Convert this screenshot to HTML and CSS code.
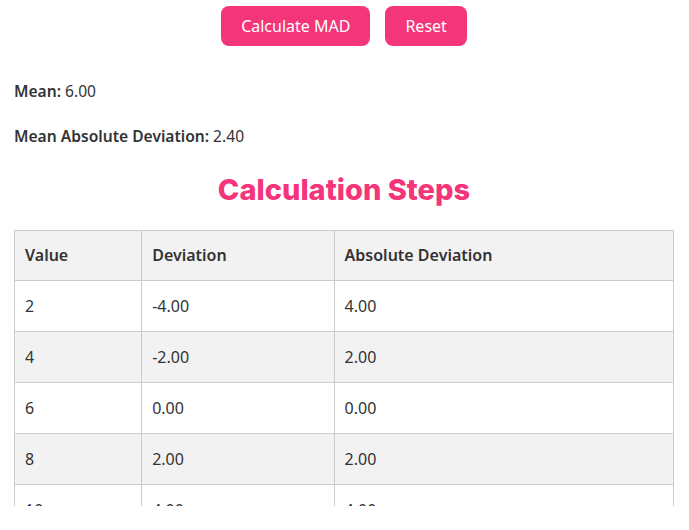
FILE: index.html
```html
<!DOCTYPE html>
<html lang="en">
<head>
  <meta charset="UTF-8">
  <title>Mean Absolute Deviation Calculator</title>
  <link rel="stylesheet" href="styles.css">
</head>
<body>

  <div class="calculator">
    <!-- buttons -->
    <div class="actions">
      <button class="btn">Calculate MAD</button>
      <button class="btn">Reset</button>
    </div>

    <!-- results -->
    <div class="result">
      <p><strong>Mean:</strong> 6.00</p>
      <p><strong>Mean Absolute Deviation:</strong> 2.40</p>
    </div>

    <h2 class="steps-title">Calculation Steps</h2>

    <table class="steps">
      <thead>
        <tr>
          <th class="col-value">Value</th>
          <th class="col-dev">Deviation</th>
          <th>Absolute Deviation</th>
        </tr>
      </thead>
      <tbody>
        <tr><td>2</td><td>-4.00</td><td>4.00</td></tr>
        <tr><td>4</td><td>-2.00</td><td>2.00</td></tr>
        <tr><td>6</td><td>0.00</td><td>0.00</td></tr>
        <tr><td>8</td><td>2.00</td><td>2.00</td></tr>
        <tr><td>10</td><td>4.00</td><td>4.00</td></tr>
      </tbody>
    </table>
  </div>

</body>
</html>
```

FILE: styles.css
```css
body {
  font-family: "Noto Sans", "Open Sans", sans-serif;
  font-size: 16px;
  color: #333;
  background: #fff;
  margin: 0;
}
/* clipped calculator area */
.calculator {
  height: 500px;
  overflow: hidden;
  padding: 6px 15px 0 14px;
}
.actions {
  display: flex;
  justify-content: center;
  gap: 15px;
}
.btn {
  font-family: inherit;
  font-size: 16px;
  line-height: 20px;
  padding: 10px 20px;
  background-color: #f5357a;
  color: #fff;
  border: none;
  border-radius: 8px;
  cursor: pointer;
}
.btn:hover {
  background-color: #e02a6b;
}
/* results */
.result {
  margin-top: 33px;
}
.result p {
  margin: 0 0 21px;
  line-height: 24px;
  font-size: 15.6px;
}
.result strong {
  font-weight: 600;
}
.steps-title {
  font-family: Inter, "Noto Sans", sans-serif;
  font-weight: 800;
  font-size: 29px;
  line-height: 34px;
  color: #f5357a;
  text-align: center;
  margin: 25px 0 23px;
}
/* steps table */
.steps {
  width: 100%;
  border-collapse: collapse;
}
.steps th,
.steps td {
  border: 1px solid #ccc;
  padding: 13px 10px;
  line-height: 24px;
  text-align: left;
}
.steps th {
  background-color: #f2f2f2;
  font-weight: 600;
  padding: 12px 10px 13px;
}
.steps tbody tr:nth-child(even) {
  background-color: #f2f2f2;
}
.col-value {
  width: 19.3%;
}
.col-dev {
  width: 29.2%;
}
```
